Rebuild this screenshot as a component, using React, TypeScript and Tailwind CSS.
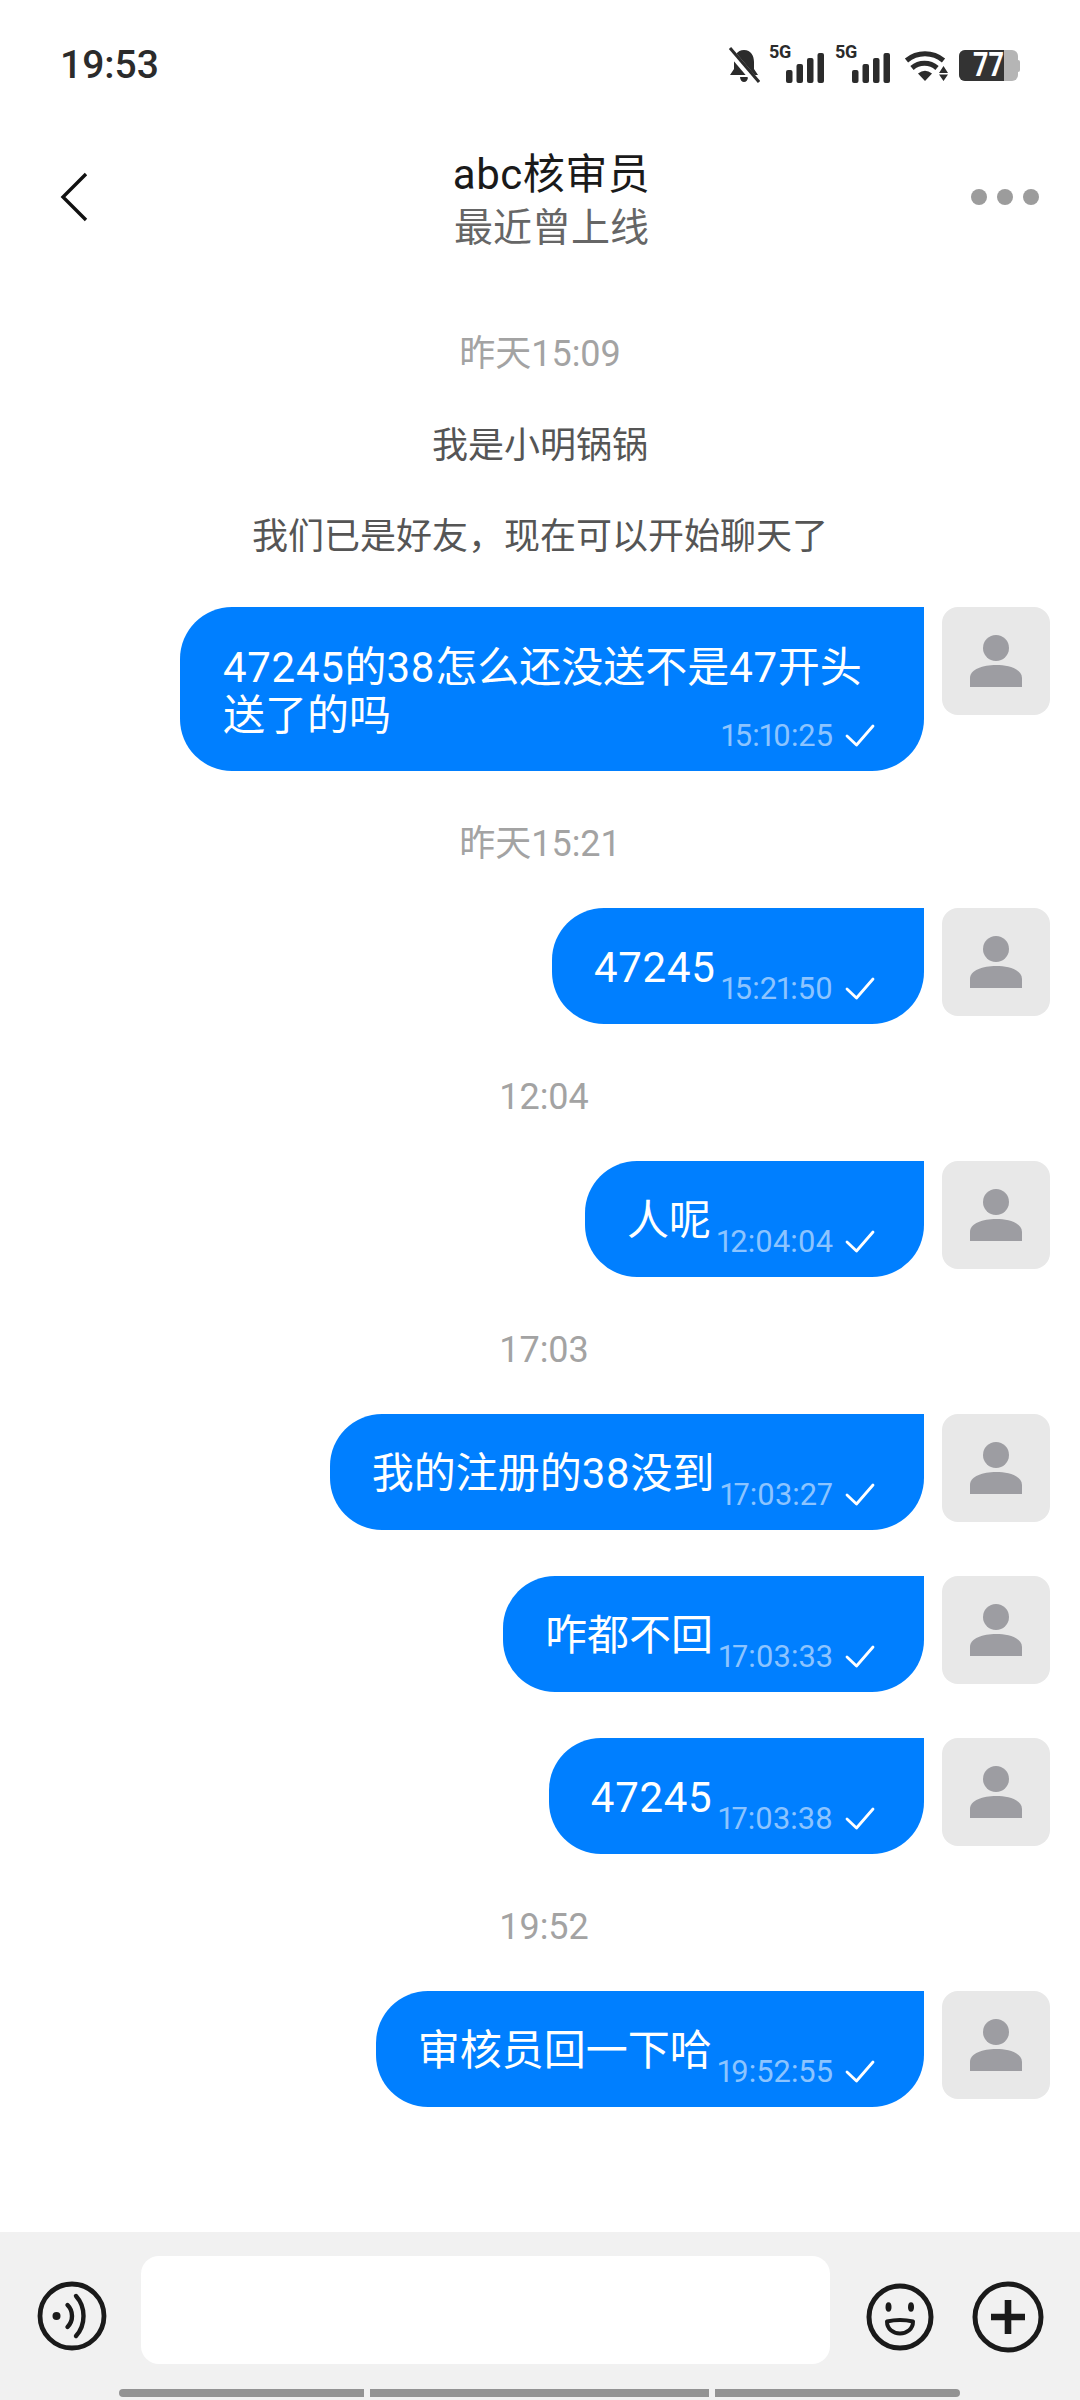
import type { ReactNode } from 'react';

const FONT = "font-['Roboto','Noto_Sans_CJK_SC',sans-serif]";

const Check = () => (
  <svg width="30" height="24" viewBox="0 0 30 24" fill="none" className="shrink-0">
    <path d="M2 12 L11.5 21 L28 2" stroke="white" strokeWidth="2.8" strokeLinecap="round" strokeLinejoin="round" />
  </svg>
);

const Avatar = () => (
  <div className="w-[108px] h-[108px] rounded-[16px] bg-[#e8e8e8] flex items-center justify-center shrink-0">
    <svg width="54" height="54" viewBox="0 0 54 54">
      <circle cx="27" cy="14" r="13" fill="#9d9da2" />
      <path d="M1 53 V44 C1 35 14 31 27 31 C40 31 53 35 53 44 V53 Z" fill="#9d9da2" />
    </svg>
  </div>
);

const Stamp = ({ text, shift }: { text: string; shift?: boolean }) => (
  <div className={`h-[64px] flex items-center justify-center text-[36px] text-[#a3a3a3] ${shift ? 'pl-[8px]' : ''}`}>{text}</div>
);

const Notice = ({ text }: { text: string }) => (
  <div className="h-[64px] flex items-center justify-center text-[36px] text-[#555555]">{text}</div>
);

const Num = ({ children }: { children: ReactNode }) => <span className="tracking-[0.7px]">{children}</span>;

const Bubble = ({ text, time }: { text: ReactNode; time: string }) => (
  <div className="flex justify-end gap-[18px] pr-[30px]">
    <div className="h-[116px] rounded-l-[52px] rounded-br-[52px] bg-[#007fff] pl-[42px] pr-[49px] flex items-center text-white">
      <span className="text-[42px] leading-[48px] mt-[4px] whitespace-nowrap">{text}</span>
      <span className="ml-[6px] mt-[46px] text-[30.8px] leading-[36px] text-[#8cc4ff] whitespace-nowrap proportional-nums">{time}</span>
      <span className="ml-[12px] mt-[46px]"><Check /></span>
    </div>
    <Avatar />
  </div>
);

const Bell = () => (
  <svg width="32" height="36" viewBox="0 0 32 36">
    <path d="M16 3 C9 3 6 9 6 15 V22 L2 28 H30 L26 22 V15 C26 9 23 3 16 3 Z" fill="#2b2b2b" />
    <path d="M12 30 H20 C20 33 18 35 16 35 C14 35 12 33 12 30 Z" fill="#2b2b2b" />
    <path d="M1 3 L29 36" stroke="white" strokeWidth="7" />
    <path d="M2 1 L31 35" stroke="#2b2b2b" strokeWidth="3" />
  </svg>
);

const Signal = () => (
  <div className="relative w-[55px] h-[38px]">
    <span className="absolute left-0 -top-[2px] text-[18px] leading-[18px] font-bold tracking-[-0.4px] text-[#2b2b2b]">5G</span>
    <svg width="38" height="30" viewBox="0 0 38 30" className="absolute right-0 bottom-0">
      <rect x="0" y="17" width="6.5" height="13" rx="2" fill="#2b2b2b" />
      <rect x="10.5" y="11" width="6.5" height="19" rx="2" fill="#2b2b2b" />
      <rect x="21" y="5" width="6.5" height="25" rx="2" fill="#2b2b2b" />
      <rect x="31.5" y="0" width="6.5" height="30" rx="2" fill="#2b2b2b" />
    </svg>
  </div>
);

const Wifi = () => (
  <svg width="44" height="36" viewBox="0 0 44 36" fill="none">
    <path d="M2.5 13.5 A29 29 0 0 1 39.5 13.5" stroke="#2b2b2b" strokeWidth="5" />
    <path d="M8 21 A19 19 0 0 1 33 21" stroke="#2b2b2b" strokeWidth="5" />
    <path d="M21 34 L14 26.5 Q21 21 28 26.5 Z" fill="#2b2b2b" />
    <path d="M39.5 19 L44 26 H35 Z M39.5 34 L44 27.5 H35 Z" fill="#2b2b2b" />
  </svg>
);

const Battery = () => (
  <div className="flex items-center mb-[2px]">
    <div className="w-[59px] h-[31px] rounded-[6px] bg-[#b5b5b5]">
      <div className="w-[45px] h-full rounded-l-[6px] bg-[#333333] flex items-center justify-end text-white text-[27px] font-bold leading-[27px]">
        <span className="scale-y-[1.2]">77</span>
      </div>
    </div>
    <div className="w-[2px] h-[12px] bg-[#b5b5b5] rounded-r-[2px]" />
  </div>
);

const VoiceIcon = () => (
  <svg width="70" height="70" viewBox="0 0 70 70" fill="none">
    <circle cx="35" cy="35" r="32" stroke="#1a1a1a" strokeWidth="4.8" />
    <circle cx="19.5" cy="35" r="4" fill="#1a1a1a" />
    <path d="M30.5 24 C36.5 30 36.5 40 30.5 46" stroke="#1a1a1a" strokeWidth="4.4" strokeLinecap="round" />
    <path d="M39 15 C49 26 49 44 39 55" stroke="#1a1a1a" strokeWidth="4.4" strokeLinecap="round" />
  </svg>
);

const SmileIcon = () => (
  <svg width="68" height="68" viewBox="0 0 68 68" fill="none">
    <circle cx="34" cy="34" r="31" stroke="#1a1a1a" strokeWidth="5" />
    <ellipse cx="22.5" cy="24" rx="3" ry="4.8" fill="#1a1a1a" />
    <ellipse cx="45" cy="24" rx="3" ry="4.8" fill="#1a1a1a" />
    <path d="M21 38.5 Q34 35.5 47 38.5 C47 46 41 50.5 34 50.5 C27 50.5 21 46 21 38.5 Z" stroke="#1a1a1a" strokeWidth="4" strokeLinejoin="round" />
  </svg>
);

const PlusIcon = () => (
  <svg width="72" height="72" viewBox="0 0 72 72" fill="none">
    <circle cx="36" cy="36" r="33" stroke="#1a1a1a" strokeWidth="5" />
    <path d="M36 19 V53 M19 36 H53" stroke="#1a1a1a" strokeWidth="6.6" />
  </svg>
);

export default function App() {
  return (
    <div className={`w-[1080px] h-[2400px] bg-white flex flex-col overflow-hidden ${FONT}`}>
      {/* Status bar */}
      <div className="h-[100px] pl-[60px] pr-[60px] pt-[38px] flex items-start justify-between">
        <span className="text-[39px] leading-[54px] font-medium text-[#2b2b2b]">19:53</span>
        <div className="flex items-end pt-[7px]">
          <Bell />
          <div className="ml-[9px]"><Signal /></div>
          <div className="ml-[11px]"><Signal /></div>
          <div className="ml-[14px]"><Wifi /></div>
          <div className="ml-[11px]"><Battery /></div>
        </div>
      </div>

      {/* Header */}
      <div className="h-[170px] flex items-start justify-between pl-[60px] pr-[41px]">
        <svg width="28" height="50" viewBox="0 0 28 50" fill="none" className="mt-[72px]">
          <path d="M26 2 L3 25 L26 48" stroke="#111111" strokeWidth="3.4" />
        </svg>
        <div className="ml-[44px] pt-[47px] flex flex-col items-center">
          <span className="text-[42px] leading-[56px] tracking-[0.5px] text-[#1a1a1a]">abc核审员</span>
          <span className="text-[39px] leading-[50px] text-[#666666]">最近曾上线</span>
        </div>
        <div className="flex gap-[10px] mt-[89px]">
          <span className="w-[16px] h-[16px] rounded-full bg-[#9c9c9c]" />
          <span className="w-[16px] h-[16px] rounded-full bg-[#9c9c9c]" />
          <span className="w-[16px] h-[16px] rounded-full bg-[#9c9c9c]" />
        </div>
      </div>

      {/* Messages */}
      <div className="flex-1 flex flex-col pt-[52px]">
        <Stamp text="昨天15:09" />
        <div className="mt-[28px]"><Notice text="我是小明锅锅" /></div>
        <div className="mt-[27px]"><Notice text="我们已是好友，现在可以开始聊天了" /></div>

        <div className="mt-[38px] flex justify-end gap-[18px] pr-[30px]">
          <div className="w-[744px] h-[164px] rounded-l-[52px] rounded-br-[52px] bg-[#007fff] pl-[43px] pr-[49px] pt-[37px] flex flex-col text-white">
            <span className="text-[42px] leading-[48px]"><Num>47245</Num>的<Num>38</Num>怎么还没送不是<Num>47</Num>开头<br />送了的吗</span>
            <div className="flex items-center justify-end -mt-[22px]">
              <span className="text-[30.8px] leading-[36px] text-[#8cc4ff] proportional-nums">15:10:25</span>
              <span className="ml-[12px]"><Check /></span>
            </div>
          </div>
          <Avatar />
        </div>

        <div className="mt-[41px] mb-[32px]"><Stamp text="昨天15:21" /></div>
        <Bubble text={<Num>47245</Num>} time="15:21:50" />
        <div className="mt-[41px] mb-[32px]"><Stamp text="12:04" shift /></div>
        <Bubble text="人呢" time="12:04:04" />
        <div className="mt-[41px] mb-[32px]"><Stamp text="17:03" shift /></div>
        <div className="flex flex-col gap-[46px]">
          <Bubble text={<>我的注册的<Num>38</Num>没到</>} time="17:03:27" />
          <Bubble text="咋都不回" time="17:03:33" />
          <Bubble text={<Num>47245</Num>} time="17:03:38" />
        </div>
        <div className="mt-[41px] mb-[32px]"><Stamp text="19:52" shift /></div>
        <Bubble text="审核员回一下哈" time="19:52:55" />
      </div>

      {/* Input bar */}
      <div className="h-[168px] bg-[#f1f1f1] flex flex-col">
        <div className="h-[157px] flex items-start pl-[37px] pt-[24px]">
          <div className="mt-[25px]"><VoiceIcon /></div>
          <div className="ml-[34px] w-[689px] h-[108px] rounded-[18px] bg-white" />
          <div className="ml-[36px] mt-[27px]"><SmileIcon /></div>
          <div className="ml-[38px] mt-[25px]"><PlusIcon /></div>
        </div>
        <div className="pl-[119px] flex gap-[6px]">
          <div className="w-[245px] h-[8px] rounded-l-full bg-[#939393]" />
          <div className="w-[339px] h-[8px] bg-[#939393]" />
          <div className="w-[245px] h-[8px] rounded-r-full bg-[#939393]" />
        </div>
      </div>
    </div>
  );
}
